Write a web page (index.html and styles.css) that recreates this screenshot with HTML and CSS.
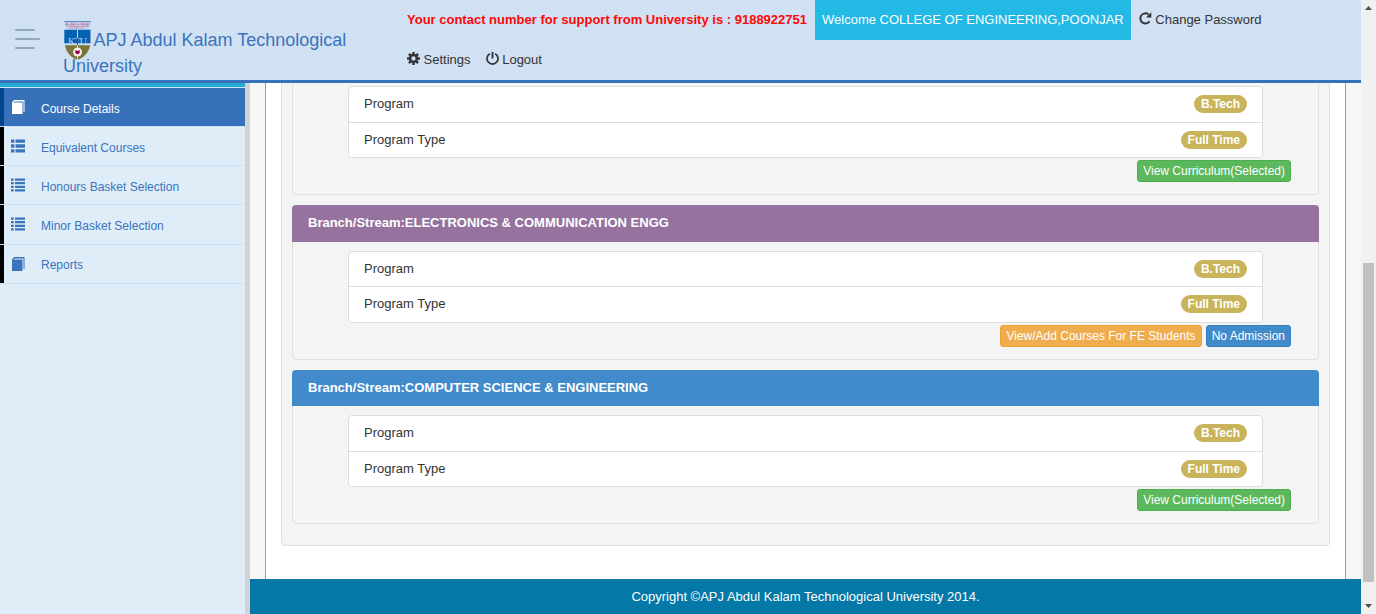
FILE: index.html
```html
<!DOCTYPE html>
<html lang="en">
<head>
<meta charset="utf-8">
<title>APJ Abdul Kalam Technological University</title>
<link rel="stylesheet" href="styles.css">
</head>
<body>
<div class="app">
  <header class="topbar">
    <div class="hamburger"><i></i><i class="long"></i><i></i></div>
    <div class="brand">
      <svg class="logo" width="28" height="39" viewBox="0 0 28 39">
        <path d="M0 .5h27" stroke="#5e8fc4"/>
        <g font-family="Liberation Sans" font-size="3.4" fill="#b277a8" text-anchor="middle">
          <text x="13.5" y="3.6" textLength="25">APJ ABDUL KALAM</text>
          <text x="13.5" y="5.9" textLength="25">TECHNOLOGICAL</text>
          <text x="13.5" y="8.2" textLength="19">UNIVERSITY</text>
        </g>
        <path d="M.3 8.700h26.200v13.600h-26.200z" fill="#0562b0"/>
        <path d="M1 24.300h25C25 32 19 37 13.500 39 8 37 2 32 1 24.300z" fill="#7b7637"/>
        <path d="M13.500 8.700V39" stroke="#c5d4ea"/>
        <text x="13.500" y="23.500" textLength="19" font-family="Liberation Serif" font-size="10" fill="#b9d7f2" text-anchor="middle">KTU</text>
        <path d="M13.500 17v7" stroke="#9a1c5d"/>
        <circle cx="13.500" cy="31" r="4.500" fill="#f6eef0"/>
        <path d="M11.300 29l2.200 1 2.200-1v3l-2.200 1.500-2.200-1.500z" fill="#94004f"/>
      </svg>APJ Abdul Kalam Technological University</div>
    <nav class="links">
      <span class="support">Your contact number for support from University is : 9188922751</span>
      <span class="welcome">Welcome COLLEGE OF ENGINEERING,POONJAR</span>
      <span><svg class="ico" viewBox="0 0 13 13"><path d="M10.600 9.300A5.100 5.100 0 1 1 9.600 2.400" fill="none" stroke="currentColor" stroke-width="1.900"/><path d="M12.300.2v5.200H7.100z" fill="currentColor"/></svg>Change Password</span>
      <span><svg class="ico" viewBox="0 0 13 13"><circle cx="6.500" cy="6.500" r="3.400" fill="none" stroke="currentColor" stroke-width="2.500"/><path d="M6.500 0v2.500M6.500 10.500V13M0 6.500h2.500M10.500 6.500H13M1.900 1.900l1.800 1.800M9.300 9.300l1.800 1.800M11.100 1.900L9.300 3.700M3.700 9.300l-1.800 1.800" stroke="currentColor" stroke-width="2.400"/></svg>Settings</span>
      <span><svg class="ico" viewBox="0 0 13 13"><path d="M3.900 1.700a5.500 5.500 0 1 0 5.200 0" fill="none" stroke="currentColor" stroke-width="1.700"/><path d="M6.500 0v6.500" stroke="currentColor" stroke-width="1.900"/></svg>Logout</span>
    </nav>
  </header>
  <div class="main">
    <aside class="sidebar">
      <div class="strip"></div>
      <div class="item active"><svg viewBox="0 0 14 14"><path d="M1 2.500L3 0h10.500V12h-1V1.500H3.300L2.500 2.500H11.500V14H1z" fill="currentColor"/></svg>Course Details</div>
      <div class="item"><svg viewBox="0 0 14 14"><path d="M0 .5h3.400v3.300H0zM4.500.5H14v3.300H4.500zM0 5.300h3.400v3.400H0zM4.500 5.300H14v3.400H4.500zM0 10.200h3.400v3.300H0zM4.500 10.200H14v3.300H4.500z" fill="currentColor"/></svg>Equivalent Courses</div>
      <div class="item"><svg viewBox="0 0 14 14"><path d="M0 .5h2.700v2.200H0zM4 .5h10v2.200H4zM0 4.100h2.700v2.200H0zM4 4.100h10v2.200H4zM0 7.700h2.700v2.200H0zM4 7.700h10v2.200H4zM0 11.300h2.700v2.200H0zM4 11.300h10v2.200H4z" fill="currentColor"/></svg>Honours Basket Selection</div>
      <div class="item"><svg viewBox="0 0 14 14"><path d="M0 .5h2.700v2.200H0zM4 .5h10v2.200H4zM0 4.100h2.700v2.200H0zM4 4.100h10v2.200H4zM0 7.700h2.700v2.200H0zM4 7.700h10v2.200H4zM0 11.300h2.700v2.200H0zM4 11.300h10v2.200H4z" fill="currentColor"/></svg>Minor Basket Selection</div>
      <div class="item"><svg viewBox="0 0 14 14"><path d="M1 2.500L3 0h10.500V12h-1V1.500H3.300L2.500 2.500H11.500V14H1z" fill="currentColor"/></svg>Reports</div>
    </aside>
    <div class="column">
      <div class="page"><div class="well">
        <section class="panel">
          <h3 class="blue">&nbsp;</h3>
          <ul><li>Program<b>B.Tech</b></li><li>Program Type<b>Full Time</b></li></ul>
          <div class="actions"><a class="btn success">View Curriculum(Selected)</a></div>
        </section>
        <section class="panel">
          <h3 class="purple">Branch/Stream:ELECTRONICS &amp; COMMUNICATION ENGG</h3>
          <ul><li>Program<b>B.Tech</b></li><li>Program Type<b>Full Time</b></li></ul>
          <div class="actions"><a class="btn warning">View/Add Courses For FE Students</a><a class="btn primary">No Admission</a></div>
        </section>
        <section class="panel">
          <h3 class="blue">Branch/Stream:COMPUTER SCIENCE &amp; ENGINEERING</h3>
          <ul><li>Program<b>B.Tech</b></li><li>Program Type<b>Full Time</b></li></ul>
          <div class="actions"><a class="btn success">View Curriculum(Selected)</a></div>
        </section>
      </div></div>
      <footer>Copyright ©APJ Abdul Kalam Technological University 2014.</footer>
    </div>
  </div>
</div>
<div class="scrollbar">
  <svg width="15" height="15" viewBox="0 0 15 15"><path d="M4 10l3.500-4L11 10z" fill="#505050"/></svg>
  <div class="thumb"></div>
  <svg width="15" height="15" viewBox="0 0 15 15"><path d="M4 5l3.500 4L11 5z" fill="#505050"/></svg>
</div>
</body>
</html>
```
FILE: styles.css
```css
* { box-sizing: border-box; }
body {
  margin: 0;
  height: 614px;
  display: flex;
  overflow: hidden;
  font: 13px/18.57px "Liberation Sans", Arial, sans-serif;
  color: #333;
}
.app { width: 1361px; height: 614px; display: flex; flex-direction: column; }
.topbar {
  height: 83px;
  flex: none;
  display: flex;
  background: #d0e1f3;
  border-bottom: 3px solid #3671ba;
}
.hamburger { width: 63px; padding: 29px 0 0 15px; display: flex; flex-direction: column; gap: 7px; }
.hamburger i { width: 20px; height: 2px; background: #90a8b8; border-radius: 1px; }
.hamburger .long { width: 25px; }
.brand {
  position: relative;
  width: 336.5px;
  padding: 27px 40px 0 0;
  font-size: 18px;
  line-height: 26px;
  text-indent: 30.5px;
  color: #3a74bd;
}
.logo { position: absolute; left: 1px; top: 21px; text-indent: 0; }
.links { width: 900px; display: flex; flex-wrap: wrap; align-content: flex-start; }
.links span { height: 40px; padding: 0 7.5px; line-height: 40px; white-space: nowrap; }
.links .support { color: #fe0808; font-weight: bold; }
.links .welcome { background: #22b9e5; color: #fff; }
.ico { width: 13px; height: 13px; margin-right: 3.6px; vertical-align: -1px; }

.main { flex: 1; min-height: 0; display: flex; }
.sidebar { width: 250px; flex: none; background: #dfedf9; border-right: 5px solid #d3d3d3; }
.strip { height: 5px; background: #23abd3; border-bottom: 1px solid #c9e4f5; }
.item {
  height: 39.15px;
  display: flex;
  align-items: center;
  padding: 4px 0 0 11px;
  font-size: 12px;
  color: #3a74bd;
  background: linear-gradient(to right, #000 4px, transparent 4px) no-repeat;
  border-bottom: 1px solid #cde0f4;
  background-clip: padding-box;
}
.item svg { width: 14px; height: 14px; margin: -4px 16px 0 0; flex: none; }
.item.active { color: #fff; background: linear-gradient(to right, #00458c 4px, #3671ba 4px); background-clip: padding-box; }

.column { flex: 1; display: flex; flex-direction: column; overflow: hidden; background: #f7f7f7; }
.page {
  height: 496px;
  flex: none;
  margin: 0 15px;
  padding: 0 15px;
  background: #fff;
  border: solid #6fa8e8;
  border-width: 0 1px;
  overflow: hidden;
}
.well {
  height: 516px;
  margin-top: -53px;
  padding: 9.6px 10px 0;
  background: #f4f4f4;
  border: 1px solid #e0e0e0;
  border-radius: 4px;
}
.panel {
  height: 154.4px;
  margin-bottom: 10.2px;
  border: 1px solid #e0e0e0;
  border-radius: 4px;
}
h3 {
  height: 36.57px;
  margin: -1px -1px 0;
  padding: 9px 16px;
  font-size: 13px;
  line-height: 18.57px;
  color: #fff;
  border-radius: 4px 4px 0 0;
}
.blue { background: #428bca; }
.purple { background: #96729f; }
ul {
  height: 71.9px;
  margin: 9.03px 55px 0;
  padding: 0;
  list-style: none;
  background: #fff;
  border: 1px solid #ddd;
  border-radius: 4px;
}
li {
  height: 34.57px;
  padding: 0 15px;
  display: flex;
  align-items: center;
  justify-content: space-between;
}
li + li { height: 35.57px; border-top: 1px solid #ddd; }
li b {
  height: 18px;
  margin-bottom: .6px;
  padding: 0 7px;
  border-radius: 10px;
  background: #c9b45c;
  color: #fff;
  font-size: 12px;
  line-height: 18px;
}
.actions { display: flex; justify-content: flex-end; gap: 4px; padding: 2.1px 27px 0 0; }
.btn {
  height: 22px;
  padding: 0 5px;
  border: 1px solid;
  border-radius: 3px;
  color: #fff;
  font-size: 12px;
  line-height: 20px;
}
.success { background: #5cb85c; border-color: #4cae4c; }
.warning { background: #f0ad4e; border-color: #eea236; }
.primary { background: #428bca; border-color: #357ebd; }
footer { height: 35px; flex: none; background: #0478a6; color: #fff; text-align: center; line-height: 35px; }

.scrollbar { width: 15px; height: 614px; display: flex; flex-direction: column; justify-content: space-between; background: #f1f1f1; }
.thumb { width: 11px; height: 319px; margin: 231px 0 0 2px; background: #c1c1c1; }
```
